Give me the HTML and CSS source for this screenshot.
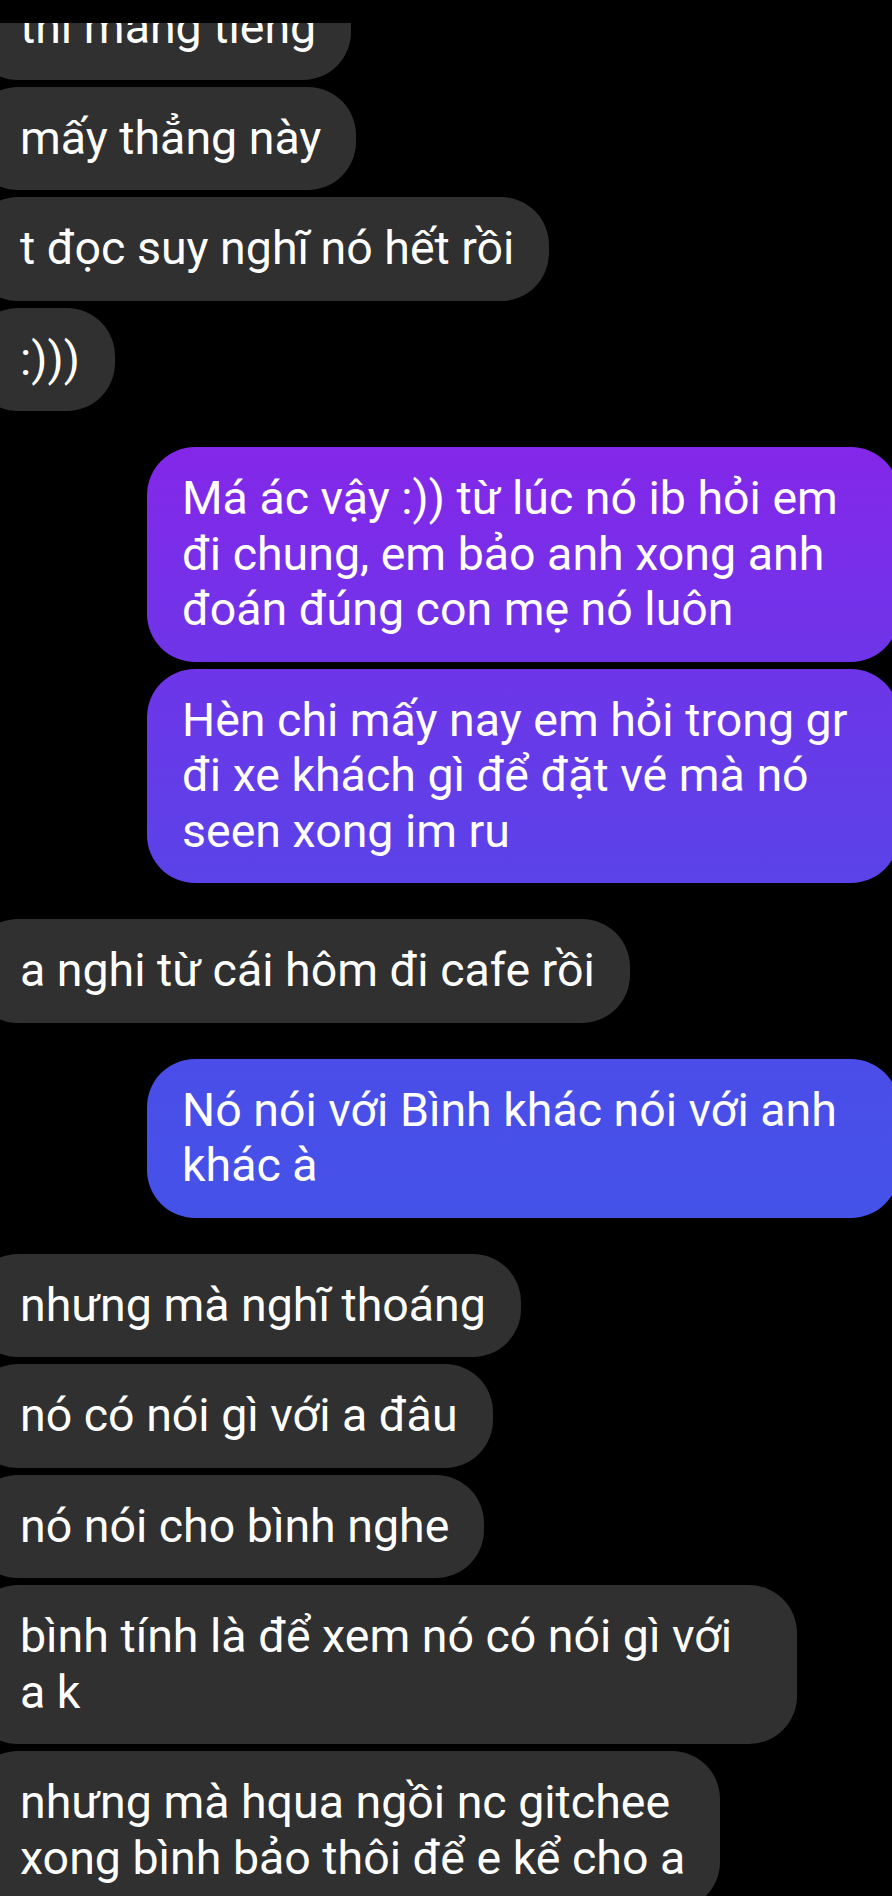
FILE: index.html
```html
<!DOCTYPE html>
<html lang="vi">
<head>
<meta charset="utf-8">
<title>Chat</title>
<link rel="stylesheet" href="styles.css">
</head>
<body>
<div class="topbar"></div>
<main class="thread">
  <section class="group group-in">
    <div class="bubble in">thì mắng tiếng</div>
    <div class="bubble in">mấy thẳng này</div>
    <div class="bubble in">t đọc suy nghĩ nó hết rồi</div>
    <div class="bubble in">:)))</div>
  </section>
  <section class="group group-out">
    <div class="bubble out">Má ác vậy :)) từ lúc nó ib hỏi em đi chung, em bảo anh xong anh đoán đúng con mẹ nó luôn</div>
    <div class="bubble out">Hèn chi mấy nay em hỏi trong gr đi xe khách gì để đặt vé mà nó seen xong im ru</div>
  </section>
  <section class="group group-in">
    <div class="bubble in">a nghi từ cái hôm đi cafe rồi</div>
  </section>
  <section class="group group-out">
    <div class="bubble out">Nó nói với Bình khác nói với anh khác à</div>
  </section>
  <section class="group group-in">
    <div class="bubble in">nhưng mà nghĩ thoáng</div>
    <div class="bubble in">nó có nói gì với a đâu</div>
    <div class="bubble in">nó nói cho bình nghe</div>
    <div class="bubble in">bình tính là để xem nó có nói gì với a k</div>
    <div class="bubble in">nhưng mà hqua ngồi nc gitchee<br>xong bình bảo thôi để e kể cho a</div>
  </section>
</main>
</body>
</html>
```

FILE: styles.css
```css
html, body {
  margin: 0;
  padding: 0;
  background: #000;
  height: 1896px;
  overflow: hidden;
}

body {
  font-family: Roboto, "Noto Sans", "Liberation Sans", sans-serif;
  color: #fff;
  position: relative;
}

.topbar {
  position: absolute;
  top: 0;
  left: 0;
  right: 0;
  height: 23px;
  background: #000;
  z-index: 2;
}

.thread {
  display: flex;
  flex-direction: column;
  gap: 36px;
  margin-top: -24px;
}

.group {
  display: flex;
  flex-direction: column;
  gap: 7px;
}

.group-in {
  align-items: flex-start;
}

.group-out {
  align-items: flex-end;
}

.bubble {
  box-sizing: border-box;
  font-size: 46.5px;
  line-height: 55.5px;
  padding-top: 24px;
  padding-bottom: 24px;
  border-radius: 48px;
}

.in {
  background: #303030;
  margin-left: -30px;
  padding-left: 50px;
  padding-right: 35px;
  max-width: 827px;
}

.out {
  margin-right: -7px;
  max-width: 752px;
  padding-left: 35px;
  padding-right: 39px;
  background-image: linear-gradient(180deg,
    #9a1cea 0%,
    #8427e9 23.5%,
    #6e35e8 35%,
    #5a43e8 46.5%,
    #4b4de8 56%,
    #4452e8 64%,
    #3f56e8 100%);
  background-attachment: fixed;
}
```
